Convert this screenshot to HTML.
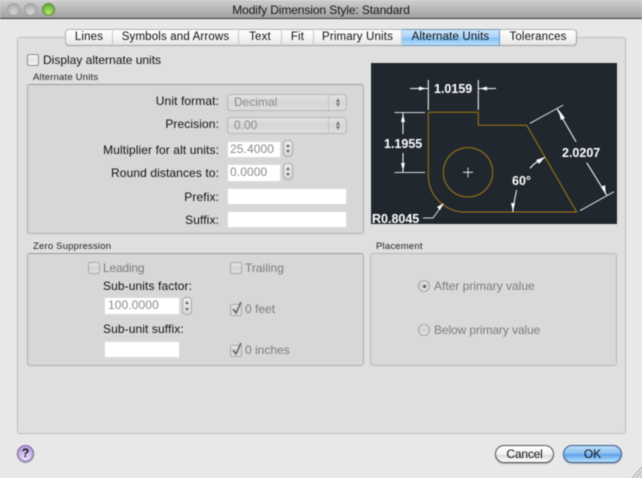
<!DOCTYPE html>
<html><head><meta charset="utf-8"><style>
html,body{margin:0;padding:0;width:642px;height:478px;overflow:hidden;background:#e8e8e8}
#w{position:absolute;left:0;top:0;width:642px;height:478px;overflow:hidden;filter:blur(.4px);font-family:"Liberation Sans",sans-serif;font-size:12px;color:#111}
#w div,#w span.t{position:absolute;box-sizing:border-box}
.t{white-space:nowrap;line-height:16px;height:16px}
.r{text-align:right;width:200px;left:19px;letter-spacing:.1px}
.d{color:#7c7c7c}
.g{font-size:9.5px;color:#222;letter-spacing:.2px;line-height:12px;height:12px}
.box{background:#d7d7d7;border:1px solid #adadad;border-top-color:#9a9a9a;border-radius:3px}
.f{background:#fff;border:1px solid #dcdcdc;color:#8a8a8a;padding-left:2px;line-height:15px;font-size:12px;letter-spacing:.1px}
.p{left:227px;width:120px;height:17px;border:1px solid #b4b4b4;border-radius:4px;background:linear-gradient(#e2e2e2,#d6d6d6 50%,#dedede);color:#8c8c8c;padding-left:6px;line-height:15px}
.p i{position:absolute;right:0;top:0;bottom:0;width:17px;border-left:1px solid #c4c4c4}
.p i:before,.p i:after,.s:before,.s:after{content:"";position:absolute;left:50%;margin-left:-2px;border-left:2px solid transparent;border-right:2px solid transparent}
.p i:before{top:3px;border-bottom:4px solid #777}
.p i:after{bottom:3px;border-top:4px solid #777}
.s{width:10px;height:17px;border:1px solid #a8a8a8;border-radius:4px;background:linear-gradient(#eee,#d8d8d8)}
.s:before{top:3px;border-bottom:3px solid #666}
.s:after{bottom:3px;border-top:3px solid #666}
.c{width:12px;height:12px;border:1px solid #a8a8a8;border-radius:2px;background:linear-gradient(#e6e6e6,#d4d4d4 50%,#e0e0e0)}
.tab{top:29px;height:17px;background:linear-gradient(#fff,#f4f4f4 50%,#e4e4e4);border-top:1px solid #b5b5b5;border-bottom:1px solid #a0a0a0;border-right:1px solid #c8c8c8;text-align:center;line-height:15px;font-size:11.5px;letter-spacing:.15px;color:#111}
.rd{width:12px;height:12px;border-radius:50%;border:1px solid #a4a4a4;background:linear-gradient(#e4e4e4,#d0d0d0 50%,#e8e8e8)}
</style></head><body><div id="w">

<div style="left:0;top:0;width:642px;height:19px;background:linear-gradient(#cfcfcf,#a0a0a0);border-bottom:1px solid #3a3a3a"></div>
<div style="left:7px;top:3px;width:13px;height:13px;border-radius:50%;background:radial-gradient(circle at 50% 75%,#d2d2d2,#a4a4a4);border:1px solid #a0a0a0"></div>
<div style="left:24px;top:3px;width:13px;height:13px;border-radius:50%;background:radial-gradient(circle at 50% 75%,#d2d2d2,#a4a4a4);border:1px solid #a0a0a0"></div>
<div style="left:42px;top:3px;width:13px;height:13px;border-radius:50%;background:radial-gradient(circle at 50% 75%,#b4ea78,#4f9a22);border:1px solid #5f8a3a"></div>
<span class="t" style="left:121px;width:400px;top:2px;text-align:center;font-size:12px;letter-spacing:-.1px;color:#151515">Modify Dimension Style: Standard</span>

<div style="left:17px;top:37px;width:609px;height:397px;background:#dfdfdf;border:1px solid #bdbdbd;border-radius:3px"></div>

<div class="tab" style="left:65px;width:48px;border-left:1px solid #b5b5b5;border-radius:4px 0 0 4px">Lines</div>
<div class="tab" style="left:113px;width:126px">Symbols and Arrows</div>
<div class="tab" style="left:239px;width:43px">Text</div>
<div class="tab" style="left:282px;width:32px">Fit</div>
<div class="tab" style="left:314px;width:88px">Primary Units</div>
<div class="tab" style="left:402px;width:98px;background:linear-gradient(#cfe6fb,#a9d2f7 50%,#7fc0f7 55%,#b9e0fb);border-color:#6f93bd">Alternate Units</div>
<div class="tab" style="left:500px;width:77px;border-right:1px solid #9c9c9c;border-radius:0 4px 4px 0">Tolerances</div>

<div class="c" style="left:27px;top:54px;background:linear-gradient(#f6f6f6,#e4e4e4 50%,#f4f4f4);border-color:#8e8e8e"></div>
<span class="t" style="left:43px;top:52px;letter-spacing:0">Display alternate units</span>

<span class="t g" style="left:33px;top:72px">Alternate Units</span>
<div class="box" style="left:27px;top:84px;width:337px;height:150px"></div>

<span class="t r" style="top:93px">Unit format:</span>
<div class="p" style="top:94px">Decimal<i></i></div>
<span class="t r" style="top:116px">Precision:</span>
<div class="p" style="top:117px">0.00<i></i></div>
<span class="t r" style="top:142px">Multiplier for alt units:</span>
<div class="f" style="left:227px;top:141px;width:54px;height:17px">25.4000</div>
<div class="s" style="left:283px;top:140px"></div>
<span class="t r" style="top:165px">Round distances to:</span>
<div class="f" style="left:227px;top:164px;width:54px;height:18px">0.0000</div>
<div class="s" style="left:283px;top:163px"></div>
<span class="t r" style="top:189px">Prefix:</span>
<div class="f" style="left:227px;top:188px;width:120px;height:17px"></div>
<span class="t r" style="top:212px">Suffix:</span>
<div class="f" style="left:227px;top:211px;width:120px;height:17px"></div>

<div style="left:371px;top:63px;width:246px;height:161px;background:#20272f"></div>
<svg style="position:absolute;left:0;top:0" width="642" height="478" viewBox="0 0 642 478" fill="none">
<path d="M428.3 112.3H478.3V125.3H526.7L576.7 212H461.7A37 37 0 0 1 428.3 175Z" stroke="#a87a10" stroke-width="1"/>
<circle cx="468" cy="172.3" r="24.7" stroke="#a87a10" stroke-width="1"/>
<g stroke="#fff" stroke-width="1">
<path d="M468 167.5V177.5M463 172.3H473" stroke-width=".8"/>
<path d="M428.3 80V110M478.3 80V110"/>
<path d="M410 88.5H428M478.5 88.5H496"/>
<path d="M394.5 112.5H425M394.5 172.5H425" stroke="#d8d8d8"/>
<path d="M403 113V134M403 153V172"/>
<path d="M530 123.3L563.3 105M580 210.7L614 191.7" stroke="#e8e8e8" stroke-width=".9"/>
<path d="M556.7 108.3L576 141.7M586.7 162.7L606.7 195"/>
<path d="M530 168.3C534 163 540 160 545 157.3M516.7 190C515 197 513.5 205 512.7 212"/>
<path d="M423 218H433L443 204" stroke="#ddd"/>
</g>
<g fill="#fff">
<path d="M419 86.5L426 88.5L419 90.5ZM487 86.5L480 88.5L487 90.5Z"/>
<path d="M401 122L403 114L405 122ZM401 163L403 171L405 163Z"/>
<path d="M558 109L565 118L561 120ZM606 195L601 187L605 185Z"/>
<path d="M545 157L539 164L536 160ZM513 212L511 203L515 203Z"/>
<path d="M444 203L440 210L437 207Z"/>
</g>
<g fill="#fff" font-family="Liberation Sans" font-weight="bold" font-size="12.5">
<text x="434" y="93">1.0159</text>
<text x="384" y="148">1.1955</text>
<text x="562" y="157">2.0207</text>
<text x="512" y="185">60°</text>
<text x="372" y="223">R0.8045</text>
</g>
</svg>

<span class="t g" style="left:33px;top:241px">Zero Suppression</span>
<div class="box" style="left:27px;top:253px;width:337px;height:113px"></div>
<span class="t g" style="left:376px;top:241px">Placement</span>
<div class="box" style="left:370px;top:253px;width:247px;height:113px;background:#d9d9d9;border-color:#b8b8b8"></div>

<div class="c" style="left:88px;top:262px"></div>
<span class="t d" style="left:103px;top:260px;letter-spacing:-.2px">Leading</span>
<div class="c" style="left:230px;top:262px"></div>
<span class="t d" style="left:245px;top:260px">Trailing</span>
<span class="t" style="left:103px;top:278px;letter-spacing:.1px">Sub-units factor:</span>
<div class="f" style="left:104px;top:297px;width:76px;height:18px;padding-left:3px">100.0000</div>
<div class="s" style="left:182px;top:297px;height:18px"></div>
<span class="t" style="left:103px;top:321px;letter-spacing:.1px">Sub-unit suffix:</span>
<div class="f" style="left:104px;top:341px;width:76px;height:17px"></div>

<div class="c" style="left:230px;top:304px"></div>
<span class="t d" style="left:245px;top:301px">0 feet</span>
<div class="c" style="left:230px;top:345px"></div>
<span class="t d" style="left:245px;top:342px">0 inches</span>
<svg style="position:absolute;left:0;top:0" width="642" height="478" fill="none" stroke="#666" stroke-width="1.6">
<path d="M233 309L236 313L241 302"/>
<path d="M233 350L236 354L241 343"/>
</svg>

<div class="rd" style="left:418px;top:280px"></div>
<div style="left:423px;top:285px;width:3px;height:3px;border-radius:50%;background:#555"></div>
<span class="t d" style="left:434px;top:278px">After primary value</span>
<div class="rd" style="left:418px;top:324px"></div>
<span class="t d" style="left:434px;top:322px;letter-spacing:-.1px">Below primary value</span>

<div style="left:17px;top:445px;width:17px;height:17px;border-radius:50%;border:1px solid #7b6a9c;background:radial-gradient(circle at 50% 75%,#efe6ff,#b79fe0 70%);box-shadow:0 1px 1px #aaa;text-align:center;font-weight:bold;font-size:12px;line-height:15px;color:#111">?</div>

<div style="left:495px;top:445px;width:59px;height:18px;border-radius:9px;border:1px solid #555;background:linear-gradient(#fff,#f2f2f2 50%,#dcdcdc 60%,#fff);box-shadow:0 1px 1px #aaa;text-align:center;line-height:16px;font-size:12px;color:#111;letter-spacing:-.2px">Cancel</div>
<div style="left:563px;top:445px;width:59px;height:18px;border-radius:9px;border:1px solid #33598c;background:linear-gradient(#bcdcf8,#8cc0f0 45%,#5ea2ea 55%,#b8e4fc);box-shadow:0 1px 1px #aaa;text-align:center;line-height:16px;font-size:12px;color:#111">OK</div>

<svg style="position:absolute;left:0;top:0" width="642" height="478" fill="none" stroke="#a8a8a8">
<path d="M632 478L642 467M636 478L642 471M640 478L642 475"/>
</svg>
</div></body></html>
